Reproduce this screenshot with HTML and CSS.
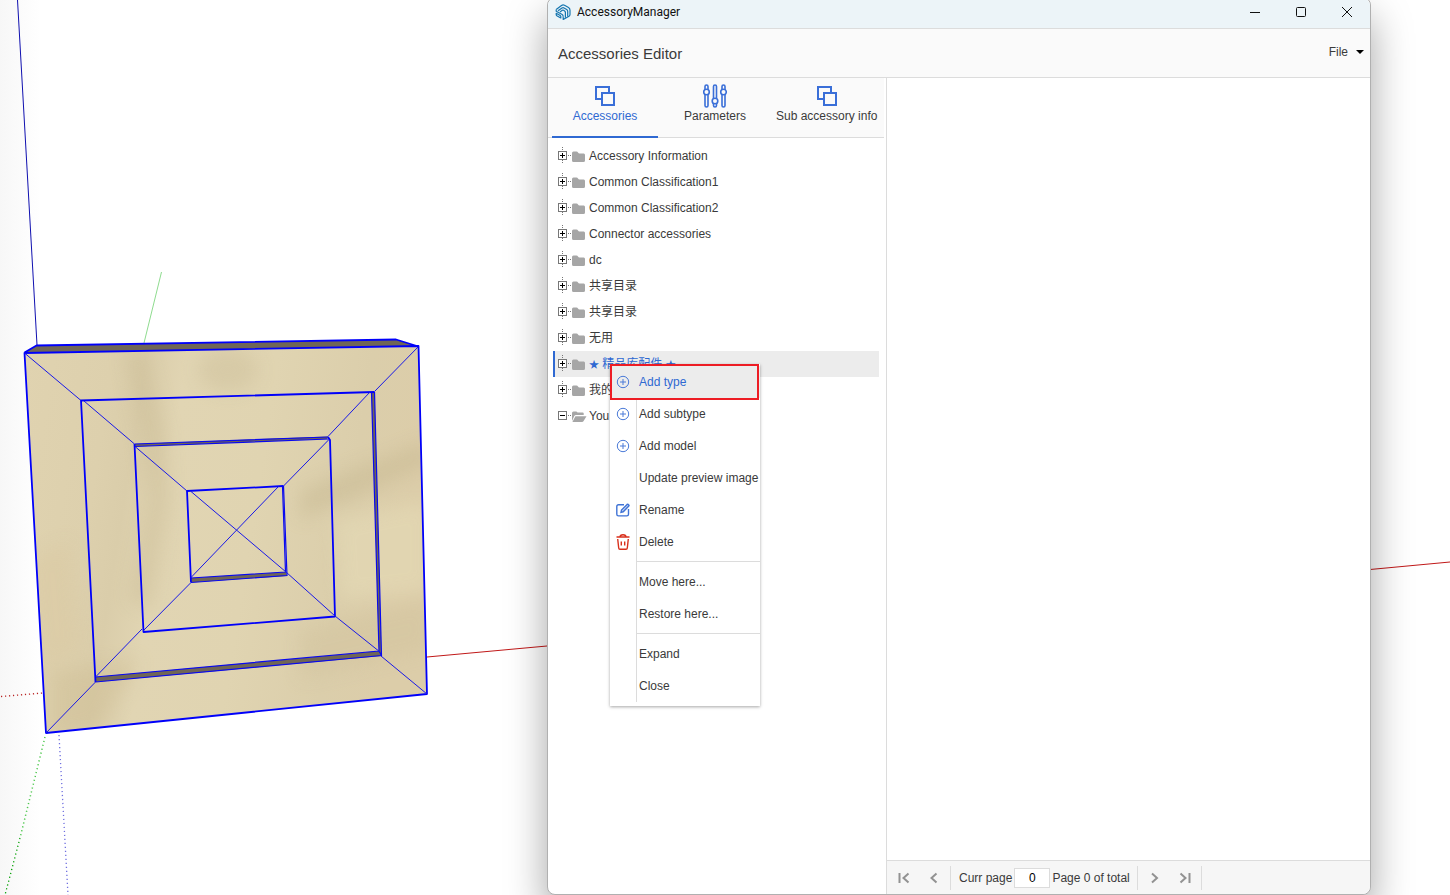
FILE: index.html
```html
<!DOCTYPE html>
<html lang="en">
<head>
<meta charset="utf-8">
<title>AccessoryManager</title>
<link rel="stylesheet" href="styles.css">
</head>
<body>
<svg class="scene" viewBox="0 0 1450 895" preserveAspectRatio="xMinYMin slice" aria-hidden="true">
  <defs>
    <linearGradient id="haze" x1="0" x2="1" y1="0" y2="0"><stop offset="0" stop-color="#f7f7f7"/><stop offset="1" stop-color="#fff"/></linearGradient>
    <linearGradient id="wood" x1="0" x2="1" y1="0" y2="0.15">
      <stop offset="0" stop-color="#e0d3b0"/><stop offset=".22" stop-color="#ddd0ad"/><stop offset=".3" stop-color="#dacdaa"/>
      <stop offset=".4" stop-color="#e1d5b3"/><stop offset=".62" stop-color="#e0d4b1"/><stop offset=".85" stop-color="#dbceab"/><stop offset="1" stop-color="#dccda9"/>
    </linearGradient>
    <filter id="soft" x="-50%" y="-50%" width="200%" height="200%"><feGaussianBlur stdDeviation="9"/></filter>
    <clipPath id="face"><path d="M24.500 353 418.500 346 427 694 46 733z"/></clipPath>
  </defs>
  <rect width="40" height="895" fill="url(#haze)"/>
  <path d="M17.500 0 37 345" stroke="#1010b0" fill="none"/>
  <path d="M161.500 272 144 343" stroke="#8fdc8f" fill="none"/>
  <path d="M427 657 547 646M1370 569.500 1450 562" stroke="#c01818" fill="none"/>
  <path d="M1 696.500 43 693" stroke="#b82020" stroke-width="1.300" stroke-dasharray="1.200 2.800" fill="none"/>
  <path d="M45 737 20 838" stroke="#50c850" stroke-width="1.500" stroke-dasharray="1.200 2.800" fill="none"/>
  <path d="M20 838 5 895" stroke="#00a000" stroke-width="1.300" stroke-dasharray="1.200 2.800" fill="none"/>
  <path d="M59 735 68 895" stroke="#7070e0" stroke-width="1.300" stroke-dasharray="1.200 2.800" fill="none"/>
  <path d="M24.500 352.500 36.500 345.500 396 339.500 418.500 346.500z" fill="#706656"/>
  <path d="M24.500 353 418.500 346 427 694 46 733z" fill="url(#wood)"/>
  <g clip-path="url(#face)"><g filter="url(#soft)" opacity=".36">
    <path d="M125 350 145 350 165 430 170 500 150 610 130 600 150 500 140 430z" fill="#c4b58e"/>
    <ellipse cx="228" cy="370" rx="30" ry="22" fill="#c8ba94"/>
    <path d="M300 490 430 440 430 465 300 520z" fill="#bfb088"/>
    <path d="M300 630 430 600 430 650 300 680z" fill="#cfc09a"/>
    <path d="M30 560 70 540 80 650 40 670z" fill="#d9c69e"/>
    <path d="M50 670 140 660 100 730 50 740z" fill="#cbb98e"/>
    <path d="M335 520 430 500 430 590 340 600z" fill="#ece4c0"/>
  </g></g>
  <g fill="#706656">
    <path d="M371.500 392 374.500 392 381.500 655 379 651z"/>
    <path d="M95.500 677 380 651 381.500 656 95.500 682z"/>
    <path d="M134.500 444 328 436.500 327 439 135 446.500z"/>
    <path d="M191 578 286 572 287 576 191 582.500z"/>
  </g>
  <g fill="none" stroke="#0000fa" stroke-width="1.800" stroke-linejoin="round">
    <path d="M24.500 353 418.500 346 427 694 46 733zM24.500 352.500 36.500 345.500 396 339.500 418.500 346.500"/>
    <path d="M95.500 682 81 400.500 374.500 392"/>
    <path d="M328 437 330 440 335 616.500 143.500 632 134.500 444"/>
    <path d="M191 582.500 187 491 283.500 486"/>
  </g>
  <g fill="none" stroke="#0808f0" stroke-width="1.200">
    <path d="M374.500 392 381.500 655.500 95.500 682M134.500 444 328 437M283.500 486 287 575.500 191 582.500"/>
    <path d="M371.500 392 379 651 95.500 677M135 446.500 329 439M282.500 486 285.500 572 191 578M379 651 381.500 655.500"/>
  </g>
  <g fill="none" stroke="#1818e8">
    <path d="M24.500 353 81 400.500M84 401 134.500 444M135 446.500 187 491M191 491.500 286 572 335 616 380 652M381 656 427 694"/>
    <path d="M418.500 346.500 374.500 391.500M370 392 328 436.500M328.500 440 283.500 486M278.500 486.500 191 577.500M191 582.500 143 631M142 629 96 676.500M95.500 682 46 733"/>
  </g>
</svg>

<main class="window">
  <header class="titlebar">
    <svg class="logo" viewBox="0 0 16 16" fill="none" stroke="#1676b0" stroke-width="1.200" stroke-linejoin="round" aria-hidden="true">
      <path d="M1.200 5.500 6.500 1.500Q8 .5 9.500 1.300L13.500 3.600Q15 4.500 15 6.200V10.500Q15 11.700 14 12.300L8.200 15.500V12.800"/>
      <path d="M3 6.800 7 4Q8 3.300 9 3.900L11.700 5.500Q12.700 6.200 12.700 7.300V12.600"/>
      <path d="M5 7.900 7.300 6.300Q8 5.900 8.700 6.300L9.600 6.900Q10.400 7.400 10.400 8.400V13.800"/>
      <path d="M1.200 5.500V7.200L7.200 10.600Q8.200 11.200 8.200 12.800M1.200 9.300 5.200 11.600Q5.800 12 5.800 12.600V14L2.200 12Q1.200 11.400 1.200 10.400z"/>
    </svg>
    <span class="caption">AccessoryManager</span>
    <button class="win-btn" type="button" aria-label="Minimize"><svg viewBox="0 0 12 12"><path d="M1 6.500h10"/></svg></button>
    <button class="win-btn" type="button" aria-label="Maximize"><svg viewBox="0 0 12 12"><rect x="1.500" y="1.500" width="9" height="9" rx="1"/></svg></button>
    <button class="win-btn" type="button" aria-label="Close window"><svg viewBox="0 0 12 12"><path d="m1 1 10 10M11 1 1 11"/></svg></button>
  </header>
  <div class="toolbar">
    <h1 class="heading">Accessories Editor</h1>
    <button class="file-btn" type="button">File <svg viewBox="0 0 8 4" aria-hidden="true"><path d="M0 0h8L4 4z"/></svg></button>
  </div>
  <div class="body">
    <aside class="side">
      <nav class="tabs">
        <button class="tab active" type="button"><svg viewBox="0 0 24 24"><path d="M16 8V3H3v12h5"/><rect class="front" x="9" y="9" width="12" height="12"/></svg>Accessories</button>
        <button class="tab" type="button"><svg viewBox="0 0 24 24"><g class="thin"><path d="M2 6V2.500a1.500 1.500 0 0 1 3 0V6M2 10v11.500a1.500 1.500 0 0 0 3 0V10M10.500 15V2.500a1.500 1.500 0 0 1 3 0V15M10.500 19v2.500a1.500 1.500 0 0 0 3 0V19M19 6V2.500a1.500 1.500 0 0 1 3 0V6M19 10v11.500a1.500 1.500 0 0 0 3 0V10"/><circle class="front" cx="3.500" cy="8" r="2.800"/><circle class="front" cx="12" cy="17" r="2.800"/><circle class="front" cx="20.500" cy="8" r="2.800"/></g></svg>Parameters</button>
        <button class="tab" type="button"><svg viewBox="0 0 24 24"><path d="M16 8V3H3v12h5"/><rect class="front" x="9" y="9" width="12" height="12"/></svg>Sub accessory info</button>
      </nav>
      <svg class="defs" aria-hidden="true">
        <symbol id="plus" viewBox="0 0 19 18"><path d="M9.500 0v4M9.500 13v4M15 8.500h4" stroke="#777" stroke-dasharray="1 1"/><rect x="5.500" y="4.500" width="8" height="8" fill="#fff" stroke="#777"/><path d="M7 8.500h5M9.500 6v5" stroke="#000"/></symbol>
        <symbol id="minus" viewBox="0 0 19 18"><path d="M15 8.500h4" stroke="#777" stroke-dasharray="1 1"/><rect x="5.500" y="4.500" width="8" height="8" fill="#fff" stroke="#777"/><path d="M7 8.500h5" stroke="#000"/></symbol>
        <symbol id="folder" viewBox="0 0 14 12"><path d="M0 3q0-1.500 1.500-1.500h3q1 0 1.500 1t1.500 1h4.300q1.200 0 1.200 1.500v5.500q0 1.500-1.500 1.500h-10Q0 12 0 10.500z" fill="#a6a6a6"/></symbol>
        <symbol id="open" viewBox="0 0 14 12" overflow="visible"><path d="M0 11V3Q0 1.500 1.500 1.500H4q1 0 1.500 1h5.200q1 0 1 1V5H4Q2.800 5 2.300 6z" fill="#a6a6a6"/><path d="M3.400 6.200H14.500L11.600 11q-.5 1-1.600 1H.4z" fill="#a6a6a6"/></symbol>
        <symbol id="add" viewBox="0 0 14 14"><circle cx="7" cy="7" r="5.700" fill="none" stroke="#4a7ad8"/><path d="M4 7h6M7 4v6" stroke="#4a7ad8"/></symbol>
      </svg>
      <ul class="tree">
        <li class="node"><svg class="switch"><use href="#plus"/></svg><svg class="folder"><use href="#folder"/></svg><a href="#">Accessory Information</a></li>
        <li class="node"><svg class="switch"><use href="#plus"/></svg><svg class="folder"><use href="#folder"/></svg><a href="#">Common Classification1</a></li>
        <li class="node"><svg class="switch"><use href="#plus"/></svg><svg class="folder"><use href="#folder"/></svg><a href="#">Common Classification2</a></li>
        <li class="node"><svg class="switch"><use href="#plus"/></svg><svg class="folder"><use href="#folder"/></svg><a href="#">Connector accessories</a></li>
        <li class="node"><svg class="switch"><use href="#plus"/></svg><svg class="folder"><use href="#folder"/></svg><a href="#">dc</a></li>
        <li class="node"><svg class="switch"><use href="#plus"/></svg><svg class="folder"><use href="#folder"/></svg><a href="#" lang="zh">共享目录</a></li>
        <li class="node"><svg class="switch"><use href="#plus"/></svg><svg class="folder"><use href="#folder"/></svg><a href="#" lang="zh">共享目录</a></li>
        <li class="node"><svg class="switch"><use href="#plus"/></svg><svg class="folder"><use href="#folder"/></svg><a href="#" lang="zh">无用</a></li>
        <li class="node selected"><svg class="switch"><use href="#plus"/></svg><svg class="folder"><use href="#folder"/></svg><a href="#" lang="zh"><span class="star">★</span> 精品库配件 <span class="star">★</span></a></li>
        <li class="node"><svg class="switch"><use href="#plus"/></svg><svg class="folder"><use href="#folder"/></svg><a href="#" lang="zh">我的</a></li>
        <li class="node"><svg class="switch"><use href="#minus"/></svg><svg class="folder"><use href="#open"/></svg><a href="#">You</a></li>
      </ul>
    </aside>
    <section class="content">
      <div class="canvas"></div>
      <footer class="pager">
        <button type="button" aria-label="First page"><svg viewBox="0 0 12 12"><path d="M1.500 1v10M10.500 1.500 5.500 6l5 4.500"/></svg></button>
        <button type="button" aria-label="Previous page"><svg viewBox="0 0 12 12"><path d="M8.500 1.500 3.500 6l5 4.500"/></svg></button>
        <span class="rule"></span>
        <label for="page">Curr page</label><input id="page" type="text" value="0">
        <span class="total">Page 0 of total</span>
        <span class="rule"></span>
        <button type="button" aria-label="Next page"><svg viewBox="0 0 12 12"><path d="M3 1.500 8 6l-5 4.500"/></svg></button>
        <button type="button" aria-label="Last page"><svg viewBox="0 0 12 12"><path d="M1.500 1.500l5 4.500-5 4.500M10.500 1v10"/></svg></button>
        <span class="rule"></span>
      </footer>
    </section>
  </div>
  <div class="menu" role="menu">
    <button class="item marked" type="button" role="menuitem"><svg><use href="#add"/></svg><span>Add type</span></button>
    <button class="item" type="button" role="menuitem"><svg><use href="#add"/></svg><span>Add subtype</span></button>
    <button class="item" type="button" role="menuitem"><svg><use href="#add"/></svg><span>Add model</span></button>
    <button class="item" type="button" role="menuitem"><span>Update preview image</span></button>
    <button class="item" type="button" role="menuitem"><svg viewBox="0 0 14 14" fill="none" stroke="#3f73d6" stroke-width="1.400"><path d="M8 1.700H2.500Q.8 1.700.8 3.400v7.800q0 1.700 1.700 1.700h8.300q1.700 0 1.700-1.700V6"/><path d="m5 9.300.5-2.300 5.600-5.600q.5-.4 1 0l.7.700q.5.500 0 1L7.200 8.800z" fill="#c5d5f5"/></svg><span>Rename</span></button>
    <button class="item" type="button" role="menuitem"><svg class="trash" viewBox="0 0 14 16" fill="none" stroke="#d9301c" stroke-width="1.400"><path d="M.5 3h13M4 3Q4 .8 7 .8T10 3M1.700 5l1 9q.1 1.200 1.300 1.200h6q1.200 0 1.300-1.200l1-9M5.300 7.500v4M8.700 7.500v4"/></svg><span>Delete</span></button>
    <hr class="divider">
    <button class="item" type="button" role="menuitem"><span>Move here...</span></button>
    <button class="item" type="button" role="menuitem"><span>Restore here...</span></button>
    <hr class="divider">
    <button class="item" type="button" role="menuitem"><span>Expand</span></button>
    <button class="item" type="button" role="menuitem"><span>Close</span></button>
  </div>
</main>
</body>
</html>
```
FILE: styles.css
```css
* { box-sizing: border-box; }
html, body { height: 100%; }
body {
  margin: 0;
  overflow: hidden;
  position: relative;
  background: #fff;
  color: #3a3a3a;
  font: 12px/16px "Liberation Sans", Arial, "Noto Sans CJK SC", sans-serif;
}
button {
  border: 0;
  padding: 0;
  background: none;
  color: inherit;
  font: inherit;
}
svg { flex: none; }
.scene { position: absolute; inset: 0; width: 100%; height: 100%; }
.defs { position: absolute; width: 0; height: 0; }

.window {
  position: absolute;
  inset: -3px 79px 0 547px;
  display: flex;
  flex-direction: column;
  border: 1px solid #b0b0b0;
  border-radius: 8px;
  background: #fff;
  box-shadow: 0 20px 40px rgba(0, 0, 0, .36);
}
.titlebar {
  display: flex;
  align-items: center;
  height: 31px;
  padding: 0 0 2px 7px;
  border-bottom: 1px solid #dcdcdc;
  border-radius: 8px 8px 0 0;
  background: #ecf4f8;
}
.logo { width: 16px; height: 16px; }
.caption { flex: 1; margin-left: 6px; color: #111; font: 12px/16px Roboto, "Noto Sans", sans-serif; }
.win-btn { width: 46px; height: 28px; display: grid; place-items: center; }
.win-btn svg { width: 12px; height: 12px; fill: none; stroke: #111; }
.toolbar {
  display: flex;
  align-items: center;
  justify-content: space-between;
  height: 49px;
  padding: 2px 6px 0 10px;
  border-bottom: 1px solid #dcdcdc;
  background: #fafafa;
}
.heading { margin: 0; font-size: 15px; line-height: 20px; font-weight: 400; }
.file-btn { display: flex; align-items: center; gap: 8px; margin-bottom: 4px; }
.file-btn svg { width: 8px; height: 4px; }
.body { flex: 1; display: flex; min-height: 0; }
.side { width: 339px; border-right: 1px solid #dcdcdc; }

.tabs {
  display: flex;
  gap: 4px;
  height: 60px;
  margin-right: 2px;
  padding-left: 4px;
  border-bottom: 1px solid #dcdcdc;
  background: #fafafa;
}
.tab {
  display: flex;
  flex-direction: column;
  align-items: center;
  min-width: 106px;
  height: 60px;
  padding: 6px 4px 0;
  white-space: nowrap;
}
.tab svg { width: 24px; height: 24px; fill: none; stroke: #3a6fd8; stroke-width: 2; }
.tab .front { fill: #fafafa; }
.tab .thin { stroke-width: 1.600; }
.tab.active { border-bottom: 2px solid #2f69d2; color: #2f69d2; }

.tree { list-style: none; margin: 5px 7px 0 5px; padding: 0; }
.node { display: flex; align-items: center; height: 26px; white-space: nowrap; }
.node a { margin-left: 3px; color: inherit; text-decoration: none; line-height: 18px; }
.node.selected { background: #ececec; box-shadow: inset 2px 0 #2f69d2; color: #2f69d2; }
.switch { width: 19px; height: 18px; }
.folder { width: 14px; height: 12px; overflow: visible; }
.star { font-size: 10px; }

.content { flex: 1; display: flex; flex-direction: column; min-width: 0; }
.canvas { flex: 1; }
.pager {
  display: flex;
  align-items: center;
  height: 34px;
  padding-left: 2px;
  border-top: 1px solid #dcdcdc;
  border-radius: 0 0 8px 0;
  background: #f6f6f6;
  white-space: nowrap;
}
.pager button { width: 30px; height: 30px; display: grid; place-items: center; }
.pager svg { width: 12px; height: 12px; fill: none; stroke: #929292; stroke-width: 2; }
.rule { width: 1px; height: 24px; background: #dcdcdc; }
.pager label { margin-left: 8px; }
.pager input {
  width: 36px;
  height: 20px;
  margin: 0 2px;
  padding: 0;
  border: 1px solid #dcdcdc;
  background: #fff;
  color: #000;
  font: inherit;
  text-align: center;
}
.total { margin-right: 7px; }
.pager .rule + button { margin-left: 2px; }
.pager button + .rule { margin-left: 1px; }

.menu {
  position: absolute;
  left: 62px;
  top: 366px;
  width: 150px;
  padding: 2px 0 4px;
  background: #fff linear-gradient(#dcdcdc, #dcdcdc) 26px 0 / 1px 100% no-repeat content-box;
  background-clip: border-box;
  box-shadow: 0 1px 3px rgba(0, 0, 0, .35);
}
.item {
  position: relative;
  display: grid;
  grid-template-columns: 26px 1fr;
  align-items: center;
  width: 100%;
  height: 32px;
  text-align: left;
  white-space: nowrap;
}
.item svg { width: 14px; height: 14px; justify-self: center; }
.item .trash { height: 16px; }
.item span { grid-column: 2; margin-left: 3px; }
.item.marked { background: #ececec; color: #2f69d2; }
.item.marked::after {
  content: "";
  position: absolute;
  inset: -2px 1px -2px 0;
  border: 2px solid #ed1c24;
}
.divider { height: 1px; margin: 3px 0 4px 27px; border: 0; background: #dcdcdc; }
```
